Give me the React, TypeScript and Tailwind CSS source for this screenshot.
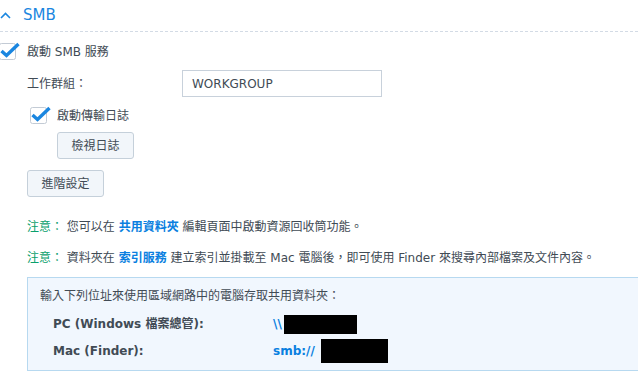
import React from "react";

function CheckBox({ className = "" }: { className?: string }) {
  return (
    <svg width="22" height="19" viewBox="0 0 22 19" className={"shrink-0 " + className}>
      <rect x="0.5" y="2.5" width="16" height="16" rx="2" fill="#fff" stroke="#c3cbd5" />
      <path d="M2.5 10 L7.5 14.5 L19.5 3" fill="none" stroke="#1a86e0" strokeWidth="3.4" strokeLinejoin="miter" />
    </svg>
  );
}

function Btn({ label }: { label: string }) {
  return (
    <button className="h-[27px] w-[77px] rounded-[3px] border border-[#c5d0da] bg-[#f2f6fa] text-[12px] text-[#414b55]">
      {label}
    </button>
  );
}

function Note({ children }: { children: React.ReactNode }) {
  return (
    <div className="ml-[27px] h-4 leading-4 whitespace-nowrap text-[12px] text-[#414b55]">
      <span className="text-[#0aa06c]">注意：</span> {children}
    </div>
  );
}

export default function App() {
  return (
    <div
      className="w-[638px] h-[382px] overflow-hidden bg-white text-[#414b55]"
      style={{ fontFamily: '"DejaVu Sans", "Noto Sans CJK TC", sans-serif' }}
    >
      <div className="flex h-[32px] items-center gap-[12px] border-b border-dashed border-[#d3dbe5] pb-[1px]">
        <svg width="11" height="7" viewBox="0 0 11 7" className="ml-[0px]">
          <path d="M1 6 L5.5 1.5 L10 6" fill="none" stroke="#1a86e0" strokeWidth="1.6" />
        </svg>
        <span className="text-[15px] text-[#1a86e0]">SMB</span>
      </div>

      <div className="mt-[9px] flex h-[19px] items-center">
        <CheckBox className="-ml-px" />
        <span className="ml-[6px] text-[12px] mt-[3px]">啟動 SMB 服務</span>
      </div>

      <div className="mt-[10px] flex h-[27px] items-center">
        <span className="ml-[27px] w-[155px] text-[12px]">工作群組：</span>
        <div className="flex h-[27px] w-[200px] items-center border border-[#c8d1db] pl-[9px] text-[12px]">
          WORKGROUP
        </div>
      </div>

      <div className="mt-[8px] flex h-[19px] items-center">
        <CheckBox className="ml-[30px]" />
        <span className="ml-[5px] text-[12px] mt-[3px]">啟動傳輸日誌</span>
      </div>

      <div className="mt-[8px] ml-[57px]">
        <Btn label="檢視日誌" />
      </div>

      <div className="mt-[11px] ml-[27px]">
        <Btn label="進階設定" />
      </div>

      <div className="mt-[22px]">
        <Note>
          您可以在 <span className="font-bold text-[#0a7fe0]">共用資料夾</span> 編輯頁面中啟動資源回收筒功能。
        </Note>
      </div>

      <div className="mt-[15px]">
        <Note>
          資料夾在 <span className="font-bold text-[#0a7fe0]">索引服務</span> 建立索引並掛載至 Mac 電腦後，即可使用 Finder 來搜尋內部檔案及文件內容。
        </Note>
      </div>

      <div className="mt-[11px] ml-[27px] w-[640px] border border-[#b7d9f0] bg-[#f1f7fe] pt-[10px] pb-[11px] pl-[12px] text-[12px]">
        <div className="h-4 leading-4">輸入下列位址來使用區域網路中的電腦存取共用資料夾：</div>
        <div className="mt-[12px] flex h-4 items-center font-bold">
          <span className="ml-[13px] w-[220px]">PC (Windows 檔案總管):</span>
          <span className="text-[#0a7fe0]">\\</span>
          <span className="ml-[2px] inline-block h-[19px] w-[73px] bg-black" />
        </div>
        <div className="mt-[11px] flex h-4 items-center font-bold">
          <span className="ml-[13px] w-[220px]">Mac (Finder):</span>
          <span className="text-[#0a7fe0]">smb://</span>
          <span className="ml-[6px] inline-block h-[24px] w-[67px] bg-black" />
        </div>
      </div>
    </div>
  );
}
